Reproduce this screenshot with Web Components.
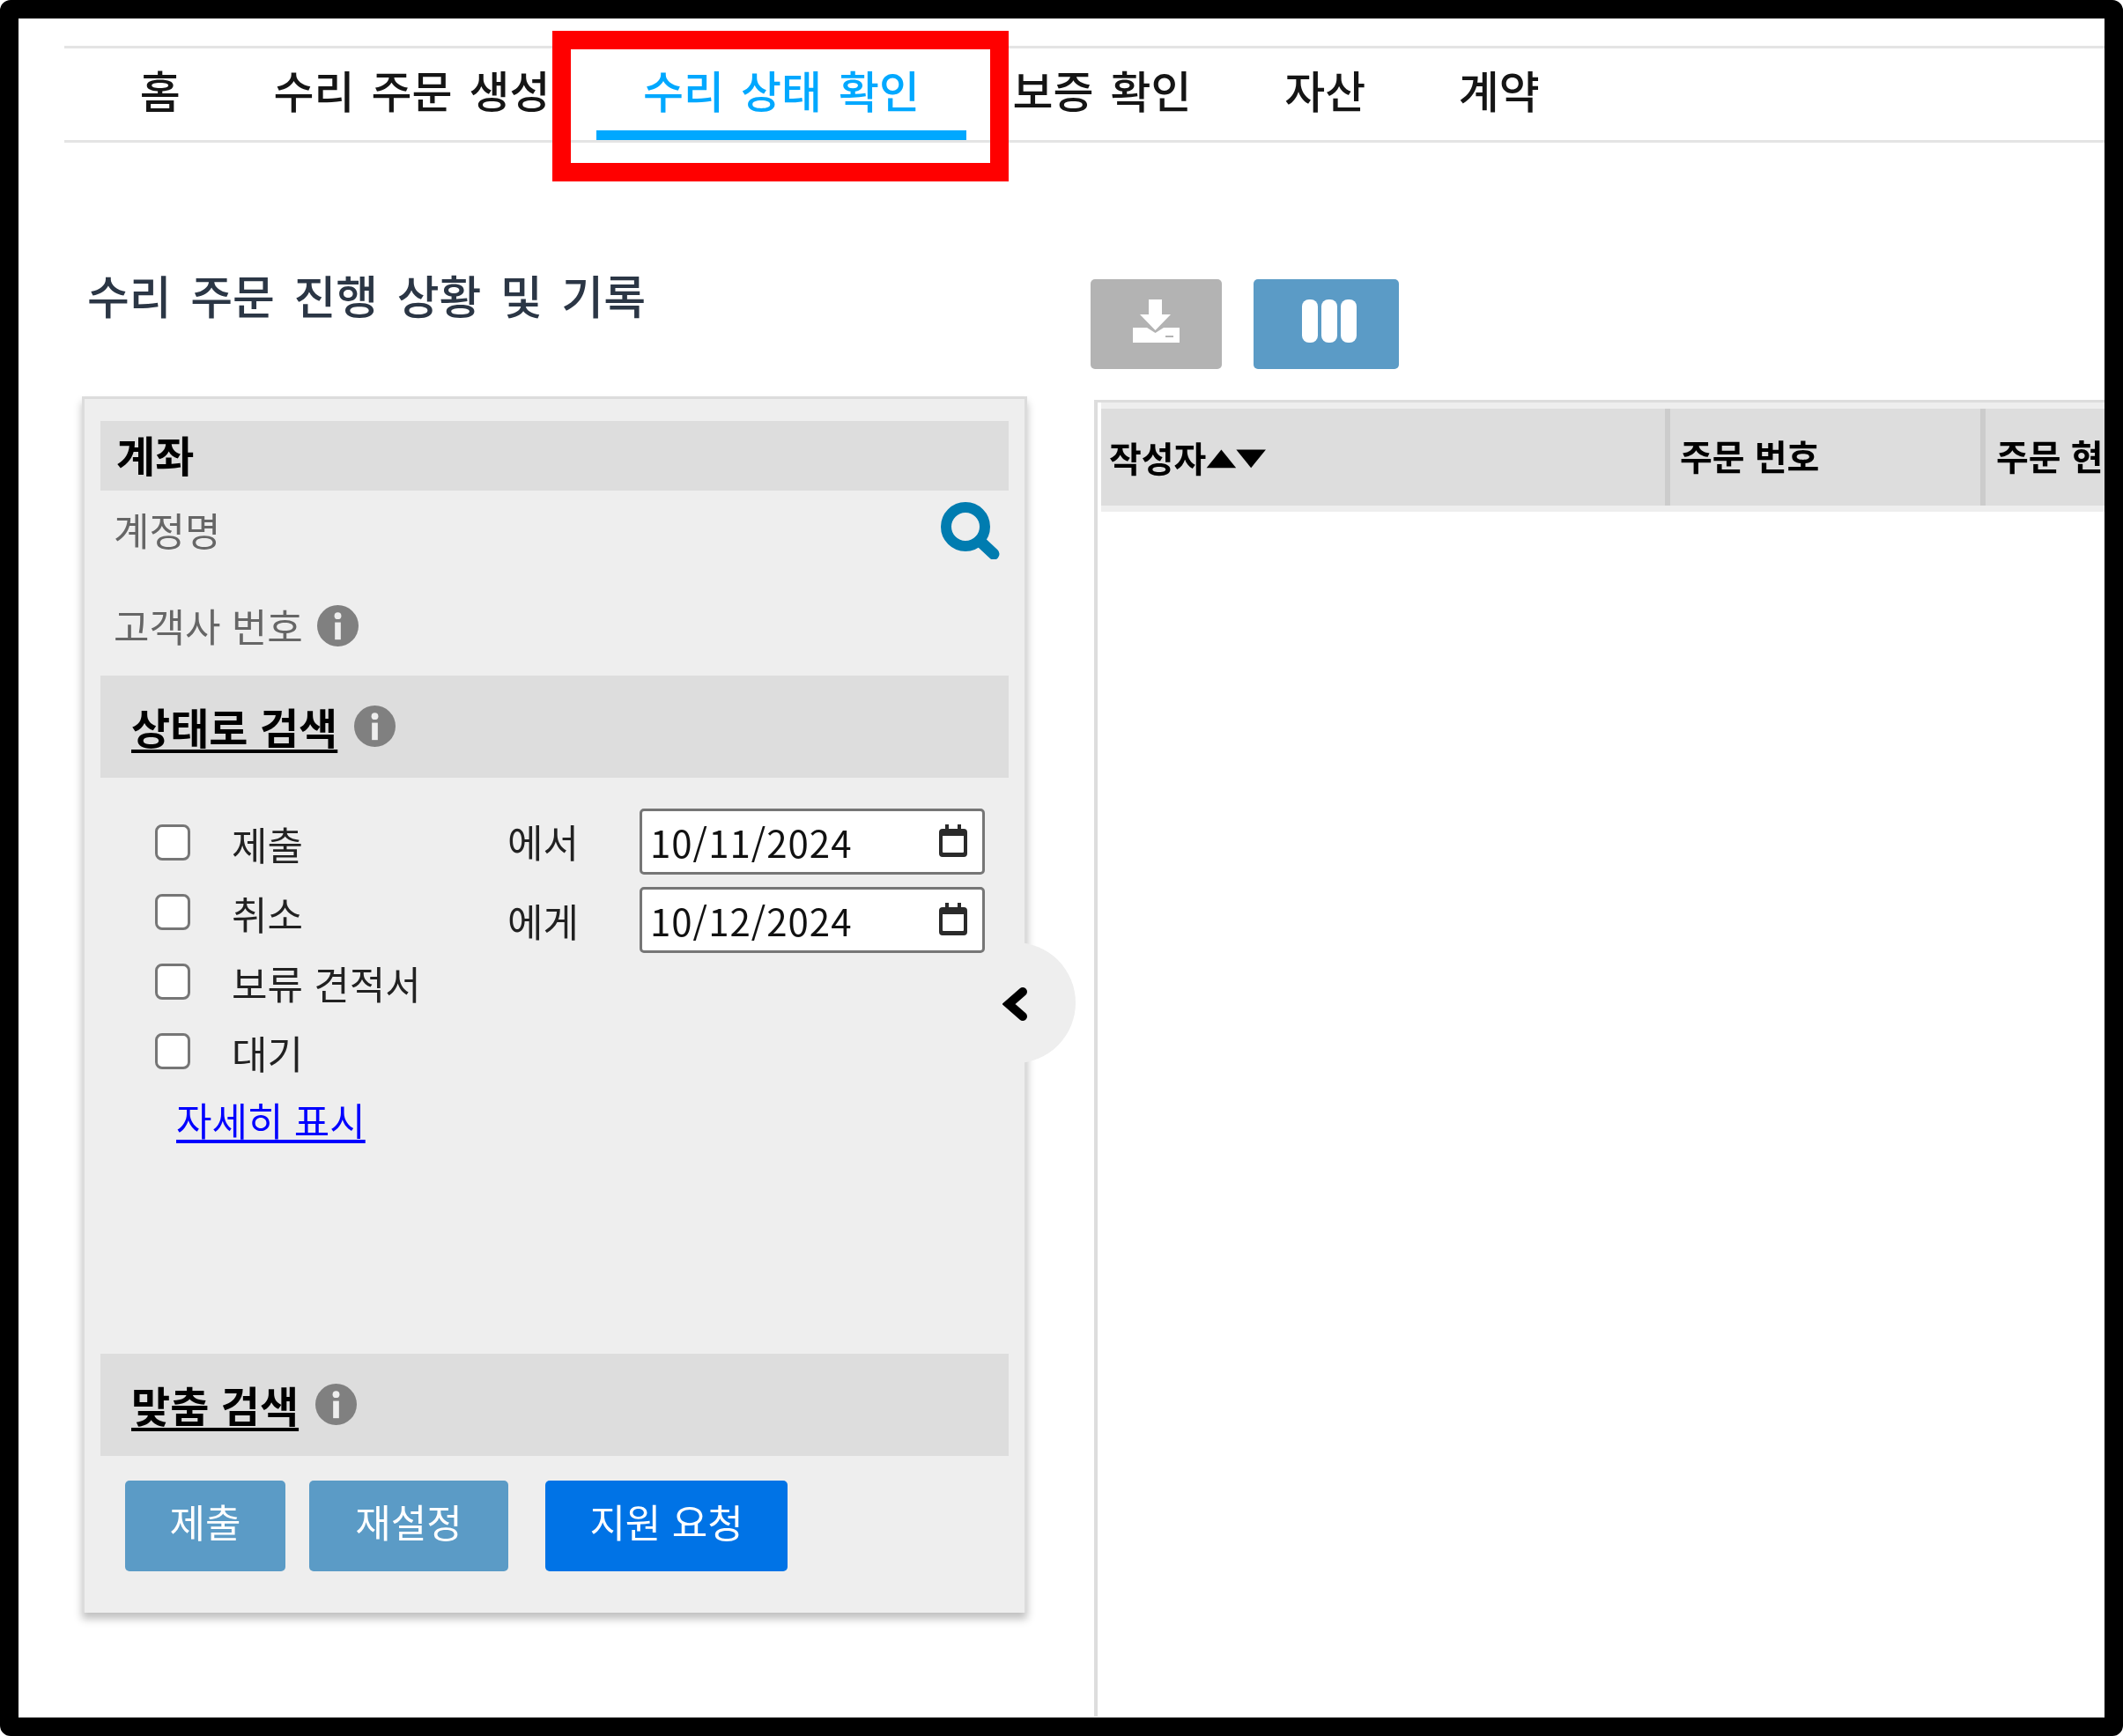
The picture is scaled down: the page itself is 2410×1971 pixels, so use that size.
<!DOCTYPE html>
<html lang="ko"><head><meta charset="utf-8"><style>
html,body{margin:0;padding:0;background:#fff}
body{width:2410px;height:1971px;overflow:hidden;font-family:"Noto Sans CJK KR","Noto Sans",sans-serif}
</style></head><body>
<app-frame>
  <main-nav slot="nav"></main-nav>
  <div slot="left"><page-title>수리 주문 진행 상황 및 기록</page-title><filter-panel></filter-panel></div>
  <div slot="right"><tool-bar></tool-bar><data-table></data-table></div>
</app-frame>
<script>
const INFO=`<svg viewBox="0 0 24 24" width="47" height="47"><circle cx="12" cy="12" r="12" fill="#808080"/><circle cx="12" cy="6.200" r="2" fill="#eee"/><rect x="10.300" y="10" width="3.400" height="10" fill="#eee"/></svg>`;
function def(name,html){customElements.define(name,class extends HTMLElement{constructor(){super();this.attachShadow({mode:'open'}).innerHTML=html}})}

def('app-frame',`<style>
:host{display:block;box-sizing:border-box;width:2410px;height:1971px;border:21px solid #000;border-radius:12px;background:#fff;position:relative;overflow:hidden;filter:blur(.6px)}
.content{display:grid;grid-template-columns:1145px 1fr;height:1787px}
.red{position:absolute;left:606px;top:14px;width:518px;height:171px;box-sizing:border-box;border:21px solid #f00;pointer-events:none}
.left{padding-left:72px;padding-top:141px;box-sizing:border-box}
.right{padding-left:76px;padding-top:155px;box-sizing:border-box;overflow:hidden}
</style><slot name="nav"></slot><div class="content"><div class="left"><slot name="left"></slot></div><div class="right"><slot name="right"></slot></div></div><div class="red"></div>`);

def('main-nav',`<style>
:host{display:flex;box-sizing:border-box;margin:31px 0 0 52px;height:110px;border-top:3px solid #e4e4e4;border-bottom:3px solid #e4e4e4;padding-left:33px;color:#151515;font-size:50px;font-weight:500;white-space:nowrap}
a{padding:0 52.800px;height:104px;line-height:93px;word-spacing:5px;box-sizing:border-box}
a:first-child{padding:0 48px 0 54px}
a.on{color:#00a8ff;border-bottom:11px solid #00a8ff}
</style><a>홈</a><a>수리 주문 생성</a><a class="on">수리 상태 확인</a><a>보증 확인</a><a>자산</a><a>계약</a>`);

def('page-title',`<style>:host{display:block;height:147px;font-size:52px;font-weight:500;line-height:64px;color:#2b3645;padding-left:6px;word-spacing:7px;white-space:nowrap}</style><slot></slot>`);

def('panel-head',`<style>
:host{display:flex;align-items:center;box-sizing:border-box;background:#ddd;color:#000;font-weight:700;font-size:48px;white-space:nowrap}
</style><slot></slot>`);

def('check-row',`<style>
:host{display:flex;align-items:center;height:79px;color:#222;font-size:44px;white-space:nowrap}
i{box-sizing:border-box;width:40px;height:41px;border:3px solid #767676;border-radius:8px;background:#fff;margin-right:47px;flex:none}
span{margin-top:3px}
</style><i></i><span><slot></slot></span>`);

def('date-field',`<style>
:host{display:flex;align-items:center;justify-content:space-between;box-sizing:border-box;width:392px;height:75px;border:3px solid #767676;border-radius:5px;background:#fff;padding:0 16px 0 9px;color:#111;font-size:42px;letter-spacing:1px}
svg{display:block;margin-top:-4px}
</style><slot></slot><svg width="34" height="38" viewBox="0 0 34 38"><path d="M8 1h4v5h10V1h4v5h3a4 4 0 0 1 4 4v24a4 4 0 0 1-4 4H5a4 4 0 0 1-4-4V10a4 4 0 0 1 4-4h3z M5 14v18a1 1 0 0 0 1 1h22a1 1 0 0 0 1-1V14z" fill="#2a2a2a" fill-rule="evenodd"/></svg>`);

def('panel-button',`<style>
:host{display:flex;justify-content:center;box-sizing:border-box;height:103px;line-height:92px;border-radius:5px;background:#5b9bc6;color:#fff;font-size:44px;white-space:nowrap}
:host([primary]){background:#0073e6}
</style><slot></slot>`);

def('filter-panel',`<style>
:host{display:block;position:relative;box-sizing:border-box;width:1073px;height:1381px;background:#eee;border:3px solid #dcdcdc;border-bottom:0;box-shadow:0 7px 9px rgba(0,0,0,.25);padding:25px 18px 0}
.h1{height:79px;padding:0 0 6px 18px}
.lbl{display:flex;align-items:center;color:#666;font-size:44px;padding-left:15px;white-space:nowrap;box-sizing:border-box}
.r1{height:90px;justify-content:space-between;padding-right:10px}
.r1 span{margin-bottom:3px}
.r2{height:120px;padding-top:6px}
.r2 svg{margin-left:16px}
.h2{height:116px;padding:0 0 2px 35px}
.h2 u{text-underline-offset:6px;margin-right:19px}
.filters{display:grid;grid-template-columns:462px 150px 1fr;height:654px;padding:34px 0 0 0;box-sizing:border-box}
.checks{padding:0 0 0 62px}
.more{display:block;margin:6px 0 0 24px;color:#00f;font-size:44px;text-decoration:underline;text-underline-offset:4px;white-space:nowrap}
.lab{display:flex;flex-direction:column;font-size:44px;color:#222;padding-top:14px}
.lab span{height:90px;line-height:48px}
.dates{display:flex;flex-direction:column;gap:14px;padding-top:1px}
.btns{display:flex;padding:28px 0 0 28px}
.btns :nth-child(1){width:182px;margin-right:27px}
.btns :nth-child(2){width:226px;margin-right:42px}
.btns :nth-child(3){width:275px}
.tab{position:absolute;left:988px;top:617px;width:137px;height:137px;border-radius:50%;background:#eee;clip-path:inset(0 0 0 70px)}
.chev{position:absolute;left:1042px;top:667px}
</style>
<panel-head class="h1">계좌</panel-head>
<div class="lbl r1"><span>계정명</span><svg width="67" height="65" viewBox="0 0 67 65"><circle cx="28" cy="28" r="22" fill="none" stroke="#007cb0" stroke-width="12"/><path d="M44 44l16 15" stroke="#007cb0" stroke-width="13" stroke-linecap="round"/></svg></div>
<div class="lbl r2"><span>고객사 번호</span>${INFO}</div>
<panel-head class="h2"><u>상태로 검색</u>${INFO}</panel-head>
<div class="filters">
 <div class="checks"><check-row>제출</check-row><check-row>취소</check-row><check-row>보류 견적서</check-row><check-row>대기</check-row><a class="more">자세히 표시</a></div>
 <div class="lab"><span>에서</span><span>에게</span></div>
 <div class="dates"><date-field>10/11/2024</date-field><date-field>10/12/2024</date-field></div>
</div>
<panel-head class="h2"><u>맞춤 검색</u>${INFO}</panel-head>
<div class="btns"><panel-button>제출</panel-button><panel-button>재설정</panel-button><panel-button primary>지원 요청</panel-button></div>
<div class="tab"></div>
<svg class="chev" width="30" height="40" viewBox="0 0 30 40"><path d="M23 6L7 20l16 14" fill="none" stroke="#000" stroke-width="10" stroke-linecap="round" stroke-linejoin="miter"/></svg>`);

def('tool-bar',`<style>
:host{display:flex;gap:36px;height:102px;margin-left:-4px}
div{height:102px;border-radius:5px;display:flex;align-items:center;justify-content:center}
.a{width:149px;background:#b3b3b3}.b{width:165px;background:#5b9bc6}
svg{margin-bottom:7px}.b svg{margin-left:7px}
</style><div class="a"><svg width="53" height="49" viewBox="0 0 53 49"><path fill="#fff" d="M18 0h15v17h10L25.500 35 8 17h10z"/><path fill="#fff" d="M0 32H16L25.500 38 35 32H53V49H0z"/><rect x="37" y="41" width="9" height="2" fill="#b3b3b3"/></svg></div><div class="b"><svg width="62" height="49" viewBox="0 0 62 49"><g fill="#fff"><rect x="0" width="18" height="49" rx="8"/><rect x="22" width="18" height="49" rx="8"/><rect x="44" width="18" height="49" rx="8"/></g></svg></div>`);

def('data-table',`<style>
:host{display:block;box-sizing:border-box;margin-top:35px;height:1600px;border-left:4px solid #ddd;border-top:3px solid #ddd;color:#000;overflow:hidden}
.hd{display:grid;grid-template-columns:646px 358px 200px;border-top:7px solid #eee;border-bottom:7px solid #eee;margin-left:4px;width:1204px}
.c{box-sizing:border-box;height:110px;background:#ddd;font-size:40px;font-weight:700;line-height:1;padding:33px 0 0 9px;white-space:nowrap;border-right:6px solid #ccc}
.c:first-child{padding-top:35px}
.c:nth-child(2){padding-left:11px}.c:nth-child(3){padding-left:12px;border:0}
b{display:inline-block;font:400 44px/40px "DejaVu Sans",sans-serif;transform:scaleY(.62);vertical-align:top}
</style><div class="hd"><div class="c">작성자<b>▲▼</b></div><div class="c">주문 번호</div><div class="c">주문 현</div></div>`);
</script>
</body></html>
